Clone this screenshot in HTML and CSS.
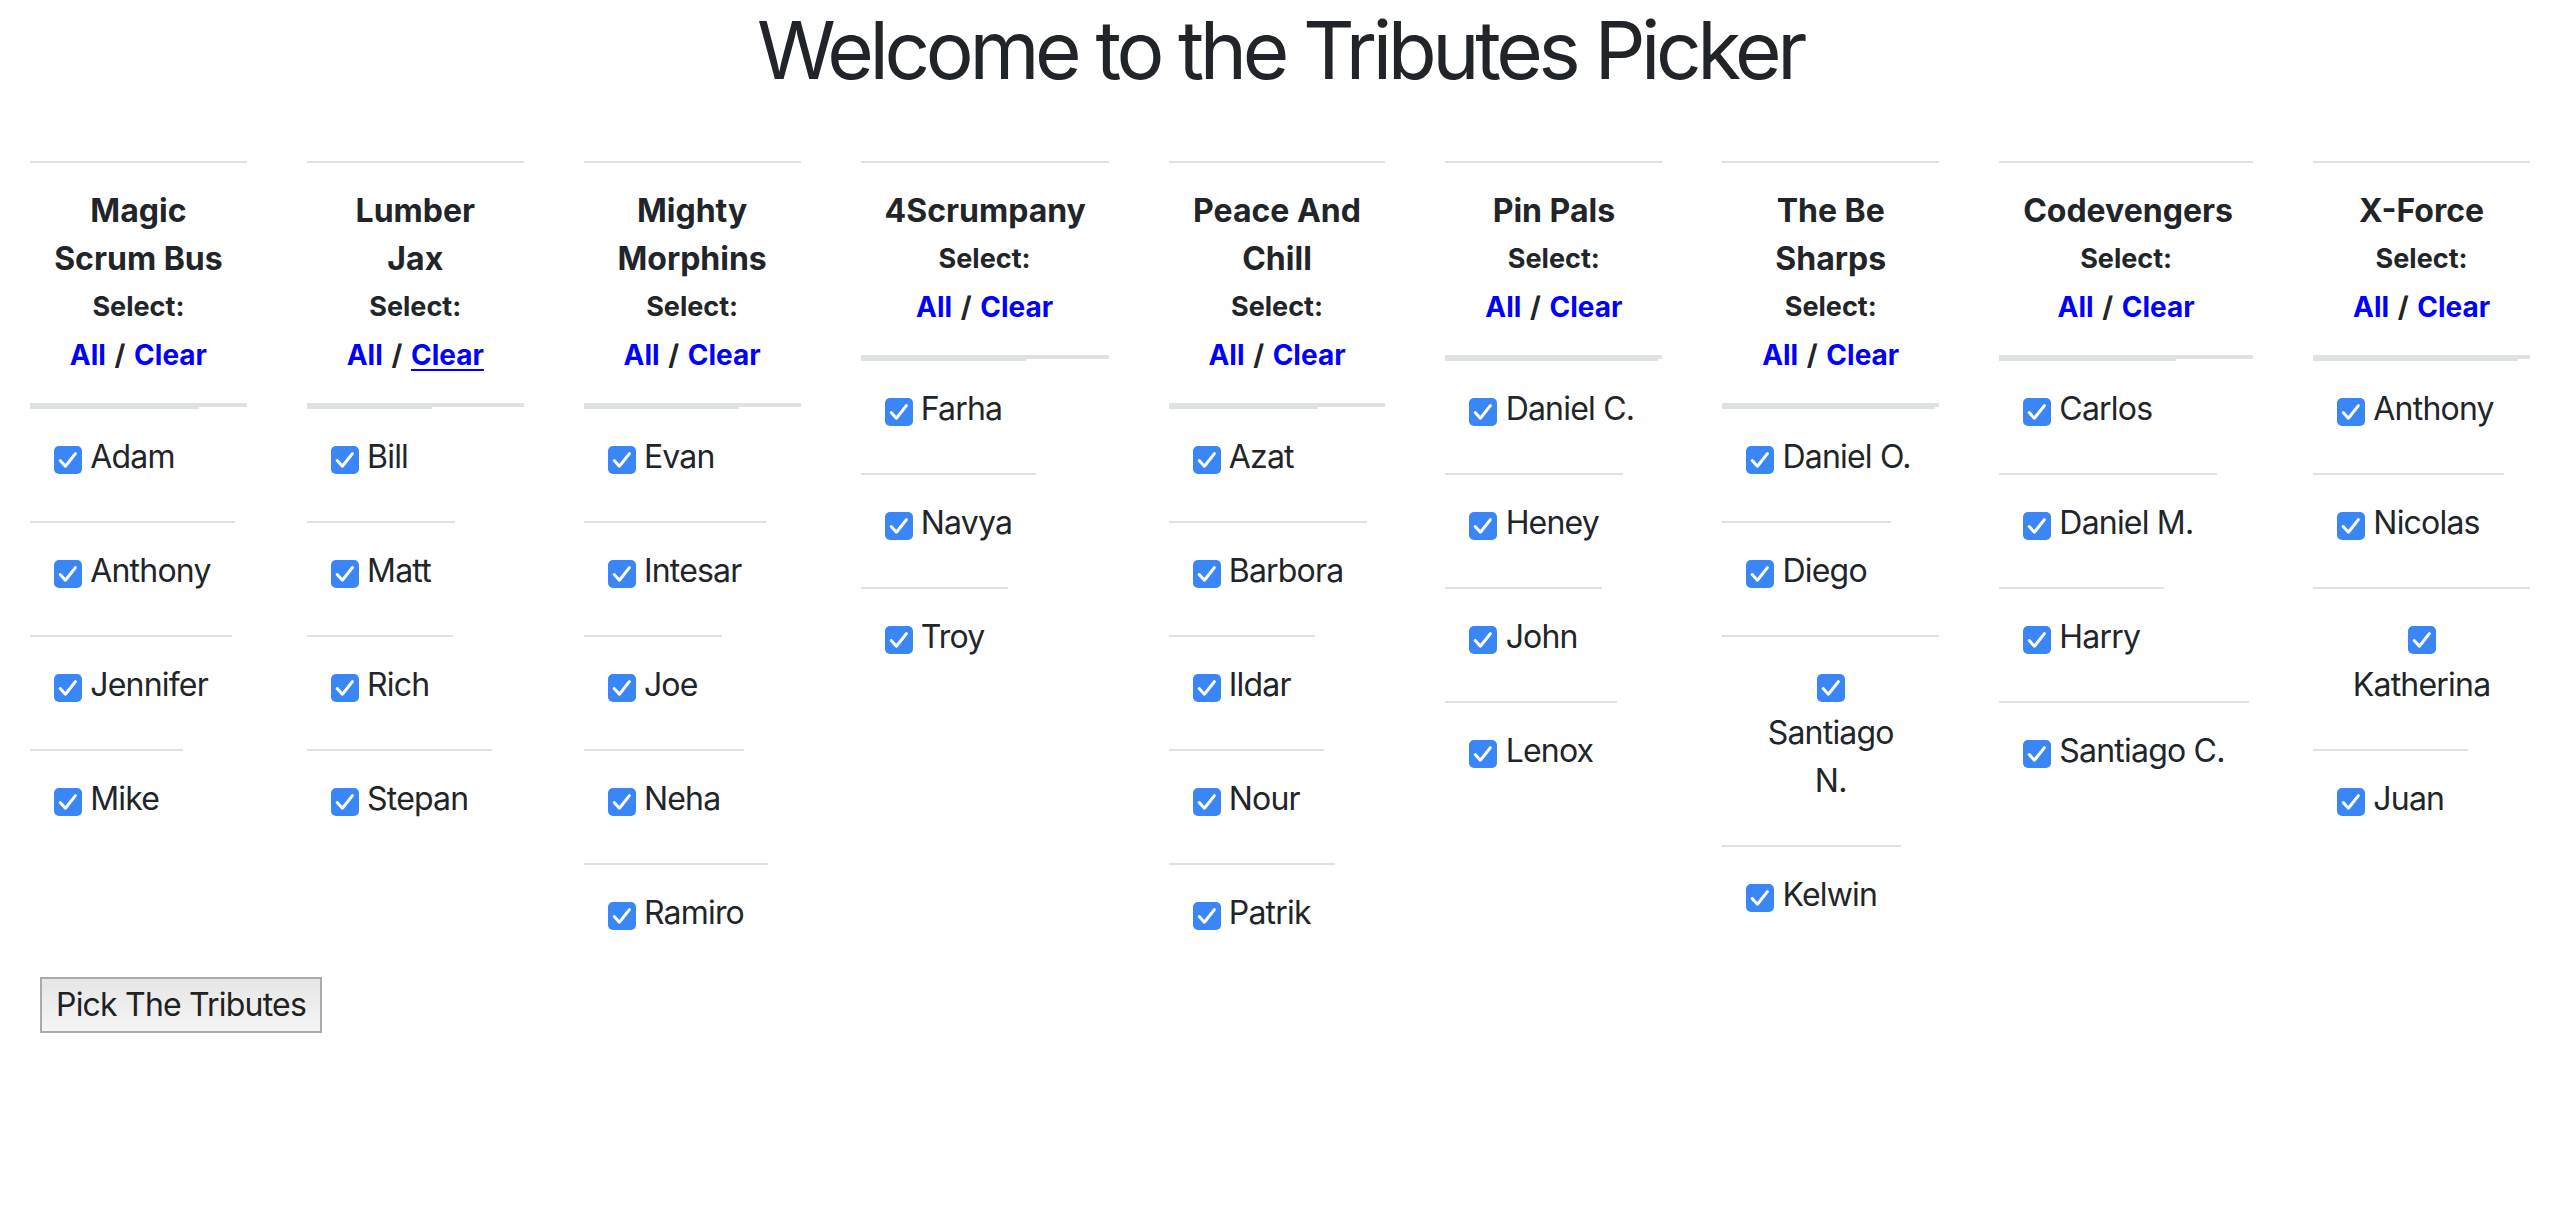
FILE: index.html
```html
<!DOCTYPE html>
<html lang="en">
<head>
<meta charset="utf-8">
<title>Tributes Picker</title>
<link rel="stylesheet" href="styles.css">
</head>
<body>
<main class="page">
  <h1 class="title">Welcome to the Tributes Picker</h1>
  <div class="teams">
    <section class="team">
      <header class="team-head">
        <div class="team-name">Magic Scrum Bus</div>
        <div class="select-label">Select:</div>
        <div class="select-links"><a class="link">All</a> / <a class="link">Clear</a></div>
      </header>
      <ul class="members">
        <li class="member"><span class="check"><svg viewBox="0 0 28 28"><rect width="28" height="28" rx="5"/><path d="M6.2 14.6 L11.4 20.2 L21.4 7.6"/></svg></span> <label class="member-name">Adam</label></li>
        <li class="member"><span class="check"><svg viewBox="0 0 28 28"><rect width="28" height="28" rx="5"/><path d="M6.2 14.6 L11.4 20.2 L21.4 7.6"/></svg></span> <label class="member-name">Anthony</label></li>
        <li class="member"><span class="check"><svg viewBox="0 0 28 28"><rect width="28" height="28" rx="5"/><path d="M6.2 14.6 L11.4 20.2 L21.4 7.6"/></svg></span> <label class="member-name">Jennifer</label></li>
        <li class="member"><span class="check"><svg viewBox="0 0 28 28"><rect width="28" height="28" rx="5"/><path d="M6.2 14.6 L11.4 20.2 L21.4 7.6"/></svg></span> <label class="member-name">Mike</label></li>
      </ul>
    </section>
    <section class="team">
      <header class="team-head">
        <div class="team-name">Lumber Jax</div>
        <div class="select-label">Select:</div>
        <div class="select-links"><a class="link">All</a> / <a class="link link-hover">Clear</a></div>
      </header>
      <ul class="members">
        <li class="member"><span class="check"><svg viewBox="0 0 28 28"><rect width="28" height="28" rx="5"/><path d="M6.2 14.6 L11.4 20.2 L21.4 7.6"/></svg></span> <label class="member-name">Bill</label></li>
        <li class="member"><span class="check"><svg viewBox="0 0 28 28"><rect width="28" height="28" rx="5"/><path d="M6.2 14.6 L11.4 20.2 L21.4 7.6"/></svg></span> <label class="member-name">Matt</label></li>
        <li class="member"><span class="check"><svg viewBox="0 0 28 28"><rect width="28" height="28" rx="5"/><path d="M6.2 14.6 L11.4 20.2 L21.4 7.6"/></svg></span> <label class="member-name">Rich</label></li>
        <li class="member"><span class="check"><svg viewBox="0 0 28 28"><rect width="28" height="28" rx="5"/><path d="M6.2 14.6 L11.4 20.2 L21.4 7.6"/></svg></span> <label class="member-name">Stepan</label></li>
      </ul>
    </section>
    <section class="team">
      <header class="team-head">
        <div class="team-name">Mighty Morphins</div>
        <div class="select-label">Select:</div>
        <div class="select-links"><a class="link">All</a> / <a class="link">Clear</a></div>
      </header>
      <ul class="members">
        <li class="member"><span class="check"><svg viewBox="0 0 28 28"><rect width="28" height="28" rx="5"/><path d="M6.2 14.6 L11.4 20.2 L21.4 7.6"/></svg></span> <label class="member-name">Evan</label></li>
        <li class="member"><span class="check"><svg viewBox="0 0 28 28"><rect width="28" height="28" rx="5"/><path d="M6.2 14.6 L11.4 20.2 L21.4 7.6"/></svg></span> <label class="member-name">Intesar</label></li>
        <li class="member"><span class="check"><svg viewBox="0 0 28 28"><rect width="28" height="28" rx="5"/><path d="M6.2 14.6 L11.4 20.2 L21.4 7.6"/></svg></span> <label class="member-name">Joe</label></li>
        <li class="member"><span class="check"><svg viewBox="0 0 28 28"><rect width="28" height="28" rx="5"/><path d="M6.2 14.6 L11.4 20.2 L21.4 7.6"/></svg></span> <label class="member-name">Neha</label></li>
        <li class="member"><span class="check"><svg viewBox="0 0 28 28"><rect width="28" height="28" rx="5"/><path d="M6.2 14.6 L11.4 20.2 L21.4 7.6"/></svg></span> <label class="member-name">Ramiro</label></li>
      </ul>
    </section>
    <section class="team">
      <header class="team-head">
        <div class="team-name">4Scrumpany</div>
        <div class="select-label">Select:</div>
        <div class="select-links"><a class="link">All</a> / <a class="link">Clear</a></div>
      </header>
      <ul class="members">
        <li class="member"><span class="check"><svg viewBox="0 0 28 28"><rect width="28" height="28" rx="5"/><path d="M6.2 14.6 L11.4 20.2 L21.4 7.6"/></svg></span> <label class="member-name">Farha</label></li>
        <li class="member"><span class="check"><svg viewBox="0 0 28 28"><rect width="28" height="28" rx="5"/><path d="M6.2 14.6 L11.4 20.2 L21.4 7.6"/></svg></span> <label class="member-name">Navya</label></li>
        <li class="member"><span class="check"><svg viewBox="0 0 28 28"><rect width="28" height="28" rx="5"/><path d="M6.2 14.6 L11.4 20.2 L21.4 7.6"/></svg></span> <label class="member-name">Troy</label></li>
      </ul>
    </section>
    <section class="team">
      <header class="team-head">
        <div class="team-name">Peace And Chill</div>
        <div class="select-label">Select:</div>
        <div class="select-links"><a class="link">All</a> / <a class="link">Clear</a></div>
      </header>
      <ul class="members">
        <li class="member"><span class="check"><svg viewBox="0 0 28 28"><rect width="28" height="28" rx="5"/><path d="M6.2 14.6 L11.4 20.2 L21.4 7.6"/></svg></span> <label class="member-name">Azat</label></li>
        <li class="member"><span class="check"><svg viewBox="0 0 28 28"><rect width="28" height="28" rx="5"/><path d="M6.2 14.6 L11.4 20.2 L21.4 7.6"/></svg></span> <label class="member-name">Barbora</label></li>
        <li class="member"><span class="check"><svg viewBox="0 0 28 28"><rect width="28" height="28" rx="5"/><path d="M6.2 14.6 L11.4 20.2 L21.4 7.6"/></svg></span> <label class="member-name">Ildar</label></li>
        <li class="member"><span class="check"><svg viewBox="0 0 28 28"><rect width="28" height="28" rx="5"/><path d="M6.2 14.6 L11.4 20.2 L21.4 7.6"/></svg></span> <label class="member-name">Nour</label></li>
        <li class="member"><span class="check"><svg viewBox="0 0 28 28"><rect width="28" height="28" rx="5"/><path d="M6.2 14.6 L11.4 20.2 L21.4 7.6"/></svg></span> <label class="member-name">Patrik</label></li>
      </ul>
    </section>
    <section class="team">
      <header class="team-head">
        <div class="team-name">Pin Pals</div>
        <div class="select-label">Select:</div>
        <div class="select-links"><a class="link">All</a> / <a class="link">Clear</a></div>
      </header>
      <ul class="members">
        <li class="member"><span class="check"><svg viewBox="0 0 28 28"><rect width="28" height="28" rx="5"/><path d="M6.2 14.6 L11.4 20.2 L21.4 7.6"/></svg></span> <label class="member-name">Daniel C.</label></li>
        <li class="member"><span class="check"><svg viewBox="0 0 28 28"><rect width="28" height="28" rx="5"/><path d="M6.2 14.6 L11.4 20.2 L21.4 7.6"/></svg></span> <label class="member-name">Heney</label></li>
        <li class="member"><span class="check"><svg viewBox="0 0 28 28"><rect width="28" height="28" rx="5"/><path d="M6.2 14.6 L11.4 20.2 L21.4 7.6"/></svg></span> <label class="member-name">John</label></li>
        <li class="member"><span class="check"><svg viewBox="0 0 28 28"><rect width="28" height="28" rx="5"/><path d="M6.2 14.6 L11.4 20.2 L21.4 7.6"/></svg></span> <label class="member-name">Lenox</label></li>
      </ul>
    </section>
    <section class="team">
      <header class="team-head">
        <div class="team-name">The Be Sharps</div>
        <div class="select-label">Select:</div>
        <div class="select-links"><a class="link">All</a> / <a class="link">Clear</a></div>
      </header>
      <ul class="members">
        <li class="member"><span class="check"><svg viewBox="0 0 28 28"><rect width="28" height="28" rx="5"/><path d="M6.2 14.6 L11.4 20.2 L21.4 7.6"/></svg></span> <label class="member-name">Daniel O.</label></li>
        <li class="member"><span class="check"><svg viewBox="0 0 28 28"><rect width="28" height="28" rx="5"/><path d="M6.2 14.6 L11.4 20.2 L21.4 7.6"/></svg></span> <label class="member-name">Diego</label></li>
        <li class="member member-stacked"><span class="check"><svg viewBox="0 0 28 28"><rect width="28" height="28" rx="5"/><path d="M6.2 14.6 L11.4 20.2 L21.4 7.6"/></svg></span> <label class="member-name">Santiago<br>N.</label></li>
        <li class="member"><span class="check"><svg viewBox="0 0 28 28"><rect width="28" height="28" rx="5"/><path d="M6.2 14.6 L11.4 20.2 L21.4 7.6"/></svg></span> <label class="member-name">Kelwin</label></li>
      </ul>
    </section>
    <section class="team">
      <header class="team-head">
        <div class="team-name">Codevengers</div>
        <div class="select-label">Select:</div>
        <div class="select-links"><a class="link">All</a> / <a class="link">Clear</a></div>
      </header>
      <ul class="members">
        <li class="member"><span class="check"><svg viewBox="0 0 28 28"><rect width="28" height="28" rx="5"/><path d="M6.2 14.6 L11.4 20.2 L21.4 7.6"/></svg></span> <label class="member-name">Carlos</label></li>
        <li class="member"><span class="check"><svg viewBox="0 0 28 28"><rect width="28" height="28" rx="5"/><path d="M6.2 14.6 L11.4 20.2 L21.4 7.6"/></svg></span> <label class="member-name">Daniel M.</label></li>
        <li class="member"><span class="check"><svg viewBox="0 0 28 28"><rect width="28" height="28" rx="5"/><path d="M6.2 14.6 L11.4 20.2 L21.4 7.6"/></svg></span> <label class="member-name">Harry</label></li>
        <li class="member"><span class="check"><svg viewBox="0 0 28 28"><rect width="28" height="28" rx="5"/><path d="M6.2 14.6 L11.4 20.2 L21.4 7.6"/></svg></span> <label class="member-name">Santiago C.</label></li>
      </ul>
    </section>
    <section class="team">
      <header class="team-head">
        <div class="team-name">X-Force</div>
        <div class="select-label">Select:</div>
        <div class="select-links"><a class="link">All</a> / <a class="link">Clear</a></div>
      </header>
      <ul class="members">
        <li class="member"><span class="check"><svg viewBox="0 0 28 28"><rect width="28" height="28" rx="5"/><path d="M6.2 14.6 L11.4 20.2 L21.4 7.6"/></svg></span> <label class="member-name">Anthony</label></li>
        <li class="member"><span class="check"><svg viewBox="0 0 28 28"><rect width="28" height="28" rx="5"/><path d="M6.2 14.6 L11.4 20.2 L21.4 7.6"/></svg></span> <label class="member-name">Nicolas</label></li>
        <li class="member"><span class="check"><svg viewBox="0 0 28 28"><rect width="28" height="28" rx="5"/><path d="M6.2 14.6 L11.4 20.2 L21.4 7.6"/></svg></span> <label class="member-name">Katherina</label></li>
        <li class="member"><span class="check"><svg viewBox="0 0 28 28"><rect width="28" height="28" rx="5"/><path d="M6.2 14.6 L11.4 20.2 L21.4 7.6"/></svg></span> <label class="member-name">Juan</label></li>
      </ul>
    </section>
  </div>
  <button class="pick" type="button">Pick The Tributes</button>
</main>
</body>
</html>
```

FILE: styles.css
```css
html, body {
  margin: 0;
  padding: 0;
  background: #ffffff;
}

body {
  font-family: Inter, "Noto Sans", sans-serif;
  font-size: 32px;
  line-height: 48px;
  color: #212529;
}

.page {
  padding: 0 30px;
}

.title {
  margin: 0 0 16px;
  padding-top: 2px;
  font-size: 80px;
  font-weight: 400;
  line-height: 96px;
  text-align: center;
  letter-spacing: -4.4px;
}

.teams {
  margin-top: 63px;
  display: grid;
  grid-template-columns: 1fr 1fr 1fr 248px 1fr 1fr 1fr 254px 1fr;
  column-gap: 60px;
  align-items: start;
}

.team {
  min-width: 0;
}

.team-head {
  border-top: 2px solid #dee2e6;
  border-bottom: 4px solid #dee2e6;
  padding: 24px;
  text-align: center;
}

.team-name {
  font-weight: 700;
  font-size: 32px;
}

.select-label {
  font-weight: 700;
  font-size: 27px;
}

.select-links {
  font-weight: 700;
  font-size: 28px;
  word-spacing: 2px;
}

.link {
  color: #0000ff;
  text-decoration: none;
  cursor: pointer;
}

.link-hover {
  text-decoration: underline;
  text-decoration-thickness: 2px;
  text-underline-offset: 4px;
}

.members {
  list-style: none;
  margin: 0;
  padding: 0;
}

.member {
  box-sizing: border-box;
  width: fit-content;
  max-width: 100%;
  padding: 24px;
  border-top: 2px solid #dee2e6;
  text-align: center;
  letter-spacing: -0.8px;
}

.member-stacked {
  width: auto;
}

.member-stacked .member-name {
  display: block;
}

.check {
  display: inline-block;
  width: 28px;
  height: 28px;
  vertical-align: -6px;
}

.check svg {
  display: block;
  width: 28px;
  height: 28px;
}

.check rect {
  fill: #3b86f6;
}

.check path {
  fill: none;
  stroke: #ffffff;
  stroke-width: 3;
  stroke-linecap: round;
  stroke-linejoin: round;
}

.member-name {
  display: inline-block;
  margin-bottom: 16px;
}

.pick {
  margin: 0 0 0 10px;
  padding: 2px 14px;
  font-family: inherit;
  font-size: 32px;
  line-height: 48px;
  letter-spacing: -0.8px;
  color: #212121;
  border: 2px solid #aaaaaa;
  border-radius: 0;
  background: linear-gradient(#e6e6e6, #f5f5f5);
}
```
